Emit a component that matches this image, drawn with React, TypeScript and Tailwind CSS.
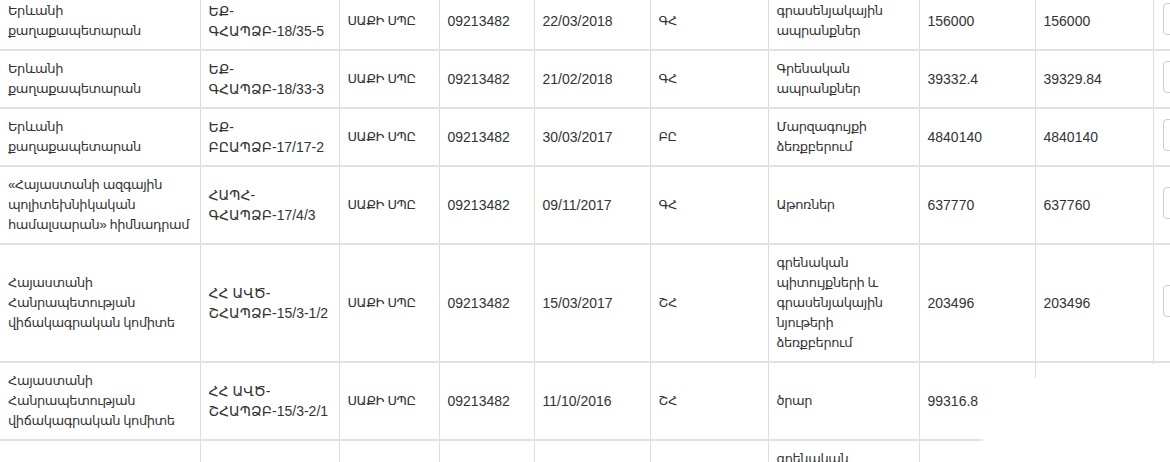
import React from 'react';

type Row = {
  org: string[];
  code: string[];
  firm: string;
  tin: string;
  date: string;
  kind: string;
  subject: string[];
  price: string;
  paid: string;
};

const rows: Row[] = [
  {
    org: ['Երևանի', 'քաղաքապետարան'],
    code: ['ԵՔ-', 'ԳՀԱՊՁԲ-18/35-5'],
    firm: 'ՍԱՔԻ ՍՊԸ',
    tin: '09213482',
    date: '22/03/2018',
    kind: 'ԳՀ',
    subject: ['գրասենյակային', 'ապրանքներ'],
    price: '156000',
    paid: '156000',
  },
  {
    org: ['Երևանի', 'քաղաքապետարան'],
    code: ['ԵՔ-', 'ԳՀԱՊՁԲ-18/33-3'],
    firm: 'ՍԱՔԻ ՍՊԸ',
    tin: '09213482',
    date: '21/02/2018',
    kind: 'ԳՀ',
    subject: ['Գրենական', 'ապրանքներ'],
    price: '39332.4',
    paid: '39329.84',
  },
  {
    org: ['Երևանի', 'քաղաքապետարան'],
    code: ['ԵՔ-', 'ԲԸԱՊՁԲ-17/17-2'],
    firm: 'ՍԱՔԻ ՍՊԸ',
    tin: '09213482',
    date: '30/03/2017',
    kind: 'ԲԸ',
    subject: ['Մարզագույքի', 'ձեռքբերում'],
    price: '4840140',
    paid: '4840140',
  },
  {
    org: ['«Հայաստանի ազգային', 'պոլիտեխնիկական', 'համալսարան» հիմնադրամ'],
    code: ['ՀԱՊՀ-', 'ԳՀԱՊՁԲ-17/4/3'],
    firm: 'ՍԱՔԻ ՍՊԸ',
    tin: '09213482',
    date: '09/11/2017',
    kind: 'ԳՀ',
    subject: ['Աթոռներ'],
    price: '637770',
    paid: '637760',
  },
  {
    org: ['Հայաստանի', 'Հանրապետության', 'վիճակագրական կոմիտե'],
    code: ['ՀՀ ԱՎԾ-', 'ՇՀԱՊՁԲ-15/3-1/2'],
    firm: 'ՍԱՔԻ ՍՊԸ',
    tin: '09213482',
    date: '15/03/2017',
    kind: 'ՇՀ',
    subject: ['գրենական', 'պիտույքների և', 'գրասենյակային', 'նյութերի', 'ձեռքբերում'],
    price: '203496',
    paid: '203496',
  },
  {
    org: ['Հայաստանի', 'Հանրապետության', 'վիճակագրական կոմիտե'],
    code: ['ՀՀ ԱՎԾ-', 'ՇՀԱՊՁԲ-15/3-2/1'],
    firm: 'ՍԱՔԻ ՍՊԸ',
    tin: '09213482',
    date: '11/10/2016',
    kind: 'ՇՀ',
    subject: ['ծրար'],
    price: '99316.8',
    paid: '',
  },
];

const Lines = ({ lines, arm }: { lines: string[]; arm?: boolean }) => (
  <>
    {lines.map((l, i) => (
      <div key={i} className={`whitespace-nowrap ${arm ? 'text-[13px] tracking-[-0.4px]' : ''}`}>
        {l}
      </div>
    ))}
  </>
);

const td = 'px-2 py-2 align-middle border-r border-[#ddd] whitespace-nowrap';
const arm = 'text-[13px] tracking-[-0.4px]';

export default function App() {
  return (
    <div
      className="relative w-[1170px] h-[462px] overflow-hidden bg-white text-[14px] leading-[20px] text-[#333]"
      style={{ fontFamily: '"Liberation Sans", "DejaVu Sans", Arial, sans-serif' }}
    >
      <table className="table-fixed border-collapse w-[1240px] -mt-[7px]">
        <colgroup>
          <col className="w-[200px]" />
          <col className="w-[139px]" />
          <col className="w-[100px]" />
          <col className="w-[95px]" />
          <col className="w-[116px]" />
          <col className="w-[118px]" />
          <col className="w-[151px]" />
          <col className="w-[116px]" />
          <col className="w-[118px]" />
          <col className="w-[87px]" />
        </colgroup>
        <tbody>
          {rows.map((r, i) => (
            <tr key={i} className="border-b-2 border-[#e2e2e2]">
              <td className={td}>
                <Lines lines={r.org} arm />
              </td>
              <td className={td}>
                <Lines lines={r.code} />
              </td>
              <td className={`${td} ${arm}`}>{r.firm}</td>
              <td className={td}>{r.tin}</td>
              <td className={td}>{r.date}</td>
              <td className={`${td} ${arm}`}>{r.kind}</td>
              <td className={td}>
                <Lines lines={r.subject} arm />
              </td>
              <td className={td}>{r.price}</td>
              <td className={td}>{r.paid}</td>
              <td className="px-2 py-2 pl-[9px] align-middle">
                <button className="h-[32px] w-[70px] rounded-[4px] border border-[#ccc] bg-white" />
              </td>
            </tr>
          ))}
          {/* next row, only its top edge is in view */}
          <tr>
            <td className={`${td} h-[60px]`} />
            <td className={td} />
            <td className={td} />
            <td className={td} />
            <td className={td} />
            <td className={td} />
            <td className={`${td} align-top`}>
              <div className={arm}>գրենական</div>
            </td>
            <td className={td} />
            <td className={td} />
            <td className="px-2 py-2" />
          </tr>
        </tbody>
      </table>
      {/* erased corner of the screenshot */}
      <div className="absolute left-[1040px] top-[364px] w-[130px] h-[98px] bg-white" />
      <div className="absolute left-[983px] top-[378px] w-[187px] h-[84px] bg-white" />
    </div>
  );
}
